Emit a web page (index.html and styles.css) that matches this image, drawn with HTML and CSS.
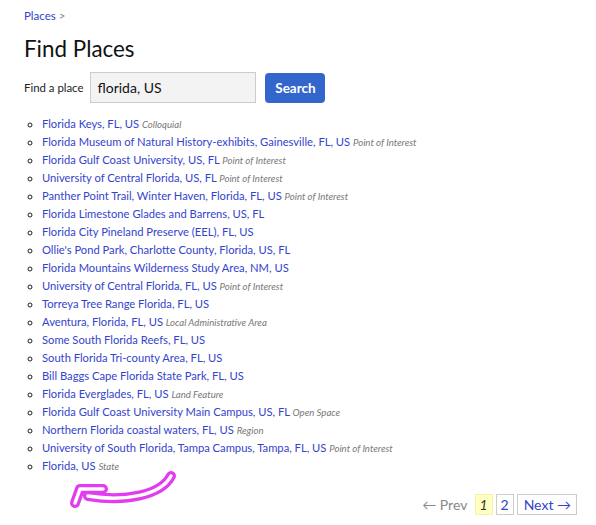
FILE: index.html
```html
<!DOCTYPE html>
<html>
<head>
<meta charset="utf-8">
<link rel="stylesheet" href="styles.css">
</head>
<body>
<div class="page">
  <nav class="crumbs"><a href="#">Places</a> <span class="sep">&gt;</span></nav>
  <h1 class="title">Find Places</h1>
  <form class="search">
    <label class="search-label">Find a place</label>
    <input class="search-input" type="text" value="florida, US">
    <button class="search-btn" type="button">Search</button>
  </form>
  <ul class="results">
    <li><a href="#">Florida Keys, FL, US</a> <em class="kind">Colloquial</em></li>
    <li><a href="#">Florida Museum of Natural History-exhibits, Gainesville, FL, US</a> <em class="kind">Point of Interest</em></li>
    <li><a href="#">Florida Gulf Coast University, US, FL</a> <em class="kind">Point of Interest</em></li>
    <li><a href="#">University of Central Florida, US, FL</a> <em class="kind">Point of Interest</em></li>
    <li><a href="#">Panther Point Trail, Winter Haven, Florida, FL, US</a> <em class="kind">Point of Interest</em></li>
    <li><a href="#">Florida Limestone Glades and Barrens, US, FL</a></li>
    <li><a href="#">Florida City Pineland Preserve (EEL), FL, US</a></li>
    <li><a href="#">Ollie's Pond Park, Charlotte County, Florida, US, FL</a></li>
    <li><a href="#">Florida Mountains Wilderness Study Area, NM, US</a></li>
    <li><a href="#">University of Central Florida, FL, US</a> <em class="kind">Point of Interest</em></li>
    <li><a href="#">Torreya Tree Range Florida, FL, US</a></li>
    <li><a href="#">Aventura, Florida, FL, US</a> <em class="kind">Local Administrative Area</em></li>
    <li><a href="#">Some South Florida Reefs, FL, US</a></li>
    <li><a href="#">South Florida Tri-county Area, FL, US</a></li>
    <li><a href="#">Bill Baggs Cape Florida State Park, FL, US</a></li>
    <li><a href="#">Florida Everglades, FL, US</a> <em class="kind">Land Feature</em></li>
    <li><a href="#">Florida Gulf Coast University Main Campus, US, FL</a> <em class="kind">Open Space</em></li>
    <li><a href="#">Northern Florida coastal waters, FL, US</a> <em class="kind">Region</em></li>
    <li><a href="#">University of South Florida, Tampa Campus, Tampa, FL, US</a> <em class="kind">Point of Interest</em></li>
    <li><a href="#">Florida, US</a> <em class="kind">State</em></li>
  </ul>
  <div class="pager">
    <span class="prev">&larr; Prev</span>
    <span class="pg current">1</span>
    <a class="pg" href="#">2</a>
    <a class="pg next" href="#">Next &rarr;</a>
  </div>
  <svg class="scribble" width="130" height="50" viewBox="60 465 130 50">
    <g fill="none" stroke-linecap="round" stroke-linejoin="round">
      <path d="M171,476 C161,495 126,502 88,496 M103,489 L80,489 L75,503" stroke="#e33cf0" stroke-width="10"/>
      <path d="M171,476 C161,495 126,502 88,496 M103,489 L80,489 L75,503" stroke="#fff" stroke-width="3.5"/>
    </g>
  </svg>
</div>
</body>
</html>
```
FILE: styles.css
```css
html, body {
  margin: 0;
  padding: 0;
  background: #fff;
}
body {
  font-family: Lato, "Open Sans", sans-serif;
  color: #222;
}
.page {
  position: relative;
  padding: 8px 19px 0 24px;
}
a {
  color: #3344cc;
  text-decoration: none;
}
.crumbs {
  font-size: 11.5px;
  line-height: 16px;
}
.crumbs .sep {
  color: #888;
}
.title {
  font-size: 22.4px;
  font-weight: 400;
  line-height: 30px;
  margin: 10px 0 8px;
  color: #111;
}
.search {
  display: flex;
  align-items: center;
  margin: 0;
}
.search-label {
  font-size: 11.4px;
  color: #222;
  margin-right: 7px;
}
.search-input {
  box-sizing: border-box;
  width: 166px;
  height: 31px;
  border: 1px solid #ccc;
  background: #f3f3f3;
  font-family: Lato, sans-serif;
  font-size: 14px;
  padding: 2px 6px;
  color: #111;
  margin: 0 9px 0 0;
}
.search-btn {
  height: 30px;
  width: 60px;
  padding: 0;
  border: none;
  border-radius: 4px;
  background: #3366cc;
  color: #fff;
  font-family: Lato, sans-serif;
  font-weight: 700;
  font-size: 13.5px;
}
.results {
  list-style: circle;
  margin: 12px 0 0;
  padding: 0 0 0 18px;
  font-size: 11.2px;
  line-height: 18px;
}
.results li {
  height: 18px;
}
.kind {
  font-size: 9.6px;
  line-height: 1;
  color: #777;
}
.pager {
  display: flex;
  justify-content: flex-end;
  align-items: center;
  gap: 3px;
  margin-top: 19px;
  font-size: 14px;
}
.prev {
  color: #888;
  margin-right: 5px;
}
.pg {
  border: 1px solid #ccc;
  padding: 0 4px;
  line-height: 19px;
}
.pg.next {
  padding: 0 5px 0 6px;
}
.pg.current {
  background: #ffffc0;
  border-color: #f6f2a8;
  color: #333;
  font-style: italic;
  padding: 0 4px 0 3px;
}
.scribble {
  position: absolute;
  left: 60px;
  top: 465px;
}
```
